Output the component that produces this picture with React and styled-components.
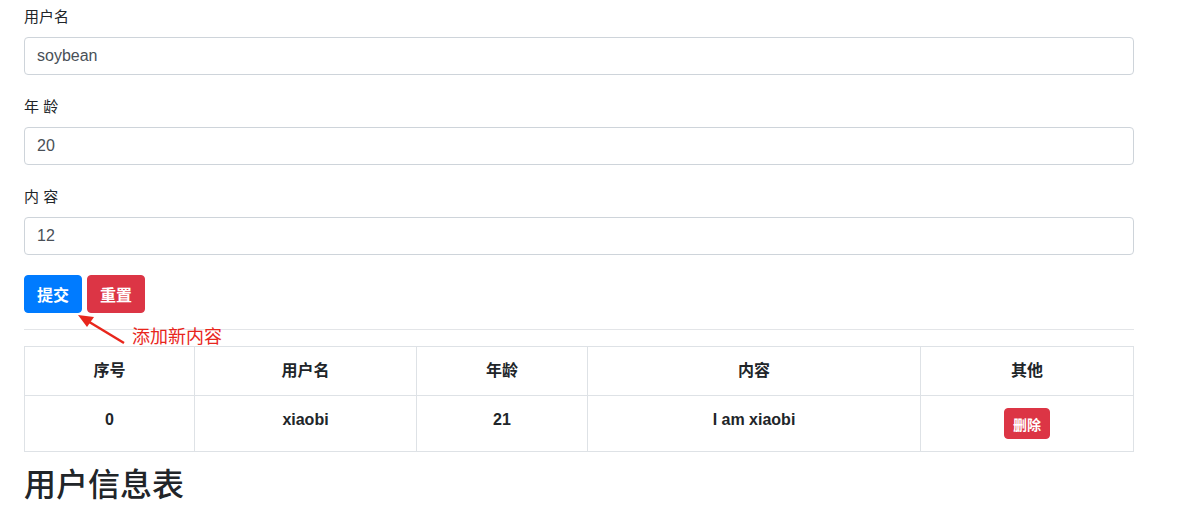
import React, { Component } from 'react';
import styled, { createGlobalStyle } from 'styled-components';

const GlobalStyle = createGlobalStyle`
  html, body {
    margin: 0;
    padding: 0;
    background: #ffffff;
  }
  body {
    font-family: "Liberation Sans", "Noto Sans CJK SC", sans-serif;
    font-size: 16px;
    line-height: 1.5;
    color: #212529;
  }
  * {
    box-sizing: border-box;
  }
`;

const Page = styled.div`
  width: 1110px;
  margin-left: 24px;
  padding-top: 5px;
`;

const FormGroup = styled.div`
  display: flex;
  flex-direction: column;
  margin-bottom: 20px;
`;

const Label = styled.label`
  display: block;
  line-height: 24px;
  margin-bottom: 8px;
  font-size: 15px;
`;

const Input = styled.input`
  display: block;
  width: 100%;
  height: 38px;
  padding: 6px 12px;
  font-family: inherit;
  font-size: 16px;
  color: #495057;
  background: #fff;
  border: 1px solid #ced4da;
  border-radius: 4px;
  outline: none;
`;

const ButtonRow = styled.div`
  position: relative;
  display: flex;
  gap: 5px;
`;

const Button = styled.button`
  height: ${props => (props.small ? '31px' : '38px')};
  padding: ${props => (props.small ? '0 8px' : '0 12px')};
  font-family: inherit;
  font-size: ${props => (props.small ? '14px' : '16px')};
  font-weight: bold;
  color: #fff;
  background: ${props => (props.variant === 'danger' ? '#dc3545' : '#007bff')};
  border: 1px solid ${props => (props.variant === 'danger' ? '#dc3545' : '#007bff')};
  border-radius: 4px;
  cursor: pointer;
`;

const Note = styled.div`
  position: absolute;
  left: 54px;
  top: 38px;
  display: flex;
  align-items: flex-start;
  pointer-events: none;
`;

const NoteText = styled.span`
  margin-top: 14px;
  margin-left: -2px;
  font-size: 18px;
  line-height: 20px;
  color: #e8261c;
`;

const Rule = styled.hr`
  margin: 16px 0;
  border: 0;
  border-top: 1px solid #e3e5e8;
`;

const Table = styled.table`
  width: 100%;
  border-collapse: collapse;
  margin-bottom: 14px;
  table-layout: fixed;
`;

const Th = styled.th`
  width: ${props => props.w}px;
  padding: 12px;
  border: 1px solid #dee2e6;
  font-weight: bold;
  text-align: center;
  vertical-align: top;
  line-height: 24px;
`;

const Td = styled.td`
  padding: 12px;
  border: 1px solid #dee2e6;
  font-weight: bold;
  text-align: center;
  vertical-align: top;
  line-height: 24px;
`;

const Heading = styled.h2`
  margin: 0;
  font-size: 32px;
  font-weight: 500;
  line-height: 1.2;
`;

const columns = [
  { title: '序号', w: 170 },
  { title: '用户名', w: 222 },
  { title: '年龄', w: 171 },
  { title: '内容', w: 333 },
  { title: '其他', w: 213 },
];

class App extends Component {
  state = {
    name: 'soybean',
    age: '20',
    content: '12',
    list: [{ name: 'xiaobi', age: 21, content: 'I am xiaobi' }],
  };

  handleChange = event => {
    const { name, value } = event.target;
    this.setState({ [name === 'username' ? 'name' : name]: value });
  };

  handleReset = () => {
    this.setState({ name: '', age: '', content: '' });
  };

  handleDelete = index => {
    this.setState(prev => ({ list: prev.list.filter((_, i) => i !== index) }));
  };

  render() {
    const { name, age, content, list } = this.state;

    return (
      <Page>
        <GlobalStyle />
        <FormGroup>
          <Label>用户名</Label>
          <Input name="username" value={name} onChange={this.handleChange} />
        </FormGroup>
        <FormGroup>
          <Label>年 龄</Label>
          <Input name="age" value={age} onChange={this.handleChange} />
        </FormGroup>
        <FormGroup>
          <Label>内 容</Label>
          <Input name="content" value={content} onChange={this.handleChange} />
        </FormGroup>
        <ButtonRow>
          <Button>提交</Button>
          <Button variant="danger" onClick={this.handleReset}>重置</Button>
          <Note>
            <svg width="56" height="36" viewBox="0 0 56 36">
              <line x1="46" y1="30" x2="8" y2="7" stroke="#e8261c" strokeWidth="2.5" />
              <polygon points="0,2 16,4 9,14" fill="#e8261c" />
            </svg>
            <NoteText>添加新内容</NoteText>
          </Note>
        </ButtonRow>
        <Rule />
        <Table>
          <thead>
            <tr>
              {columns.map(col => (
                <Th key={col.title} w={col.w}>{col.title}</Th>
              ))}
            </tr>
          </thead>
          <tbody>
            {list.map((item, index) => (
              <tr key={index}>
                <Td>{index}</Td>
                <Td>{item.name}</Td>
                <Td>{item.age}</Td>
                <Td>{item.content}</Td>
                <Td>
                  <Button small variant="danger" onClick={() => this.handleDelete(index)}>删除</Button>
                </Td>
              </tr>
            ))}
          </tbody>
        </Table>
        <Heading>用户信息表</Heading>
      </Page>
    );
  }
}

export default App;
